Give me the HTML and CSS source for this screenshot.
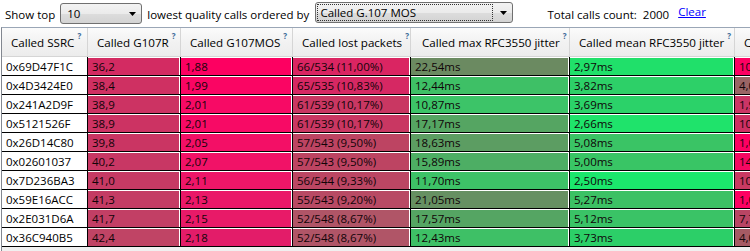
FILE: index.html
```html
<!DOCTYPE html>
<html>
<head>
<meta charset="utf-8">
<link rel="stylesheet" href="styles.css">
</head>
<body>
<div class="topbar">
  <span class="lbl">Show top</span>
  <div class="sel sel-top">
    <span class="sel-text">10</span>
    <svg class="arrow" width="7" height="4" viewBox="0 0 7 4"><path d="M0 0h7L3.5 4z" fill="#000"/></svg>
  </div>
  <span class="lbl lbl-mid">lowest quality calls ordered by</span>
  <div class="sel sel-order">
    <span class="sel-text focus">Called G.107 MOS</span>
    <svg class="arrow" width="7" height="4" viewBox="0 0 7 4"><path d="M0 0h7L3.5 4z" fill="#000"/></svg>
  </div>
  <span class="lbl lbl-total">Total calls count:</span>
  <span class="lbl lbl-count">2000</span>
  <a class="clear" href="#">Clear</a>
</div>
<div class="wrap">
  <div class="grid">
    <div class="h">Called SSRC<sup>?</sup></div>
    <div class="h">Called G107R<sup>?</sup></div>
    <div class="h">Called G107MOS<sup>?</sup></div>
    <div class="h">Called lost packets<sup>?</sup></div>
    <div class="h h-wide">Called max RFC3550 jitter<sup>?</sup></div>
    <div class="h">Called mean RFC3550 jitter<sup>?</sup></div>
    <div class="h">Called min RFC3550 jitter<sup>?</sup></div>

    <div class="c c-id">0x69D47F1C</div>
    <div class="c"><div class="f" style="background:#d32b62">36,2</div></div>
    <div class="c"><div class="f" style="background:#fd0061">1,88</div></div>
    <div class="c"><div class="f" style="background:#da2562">66/534 (11,00%)</div></div>
    <div class="c"><div class="f" style="background:#6b8a61">22,54ms</div></div>
    <div class="c"><div class="f" style="background:#20e06a">2,97ms</div></div>
    <div class="c"><div class="f" style="background:#fd0062">10,00ms</div></div>

    <div class="c c-id">0x4D3424E0</div>
    <div class="c"><div class="f" style="background:#cf3062">38,4</div></div>
    <div class="c"><div class="f" style="background:#fa0563">1,99</div></div>
    <div class="c"><div class="f" style="background:#d62863">65/535 (10,83%)</div></div>
    <div class="c"><div class="f" style="background:#3ec066">12,44ms</div></div>
    <div class="c"><div class="f" style="background:#2dd068">3,82ms</div></div>
    <div class="c"><div class="f" style="background:#9a6565">4,00ms</div></div>

    <div class="c c-id">0x241A2D9F</div>
    <div class="c"><div class="f" style="background:#cc3363">38,9</div></div>
    <div class="c"><div class="f" style="background:#f70a65">2,01</div></div>
    <div class="c"><div class="f" style="background:#c93762">61/539 (10,17%)</div></div>
    <div class="c"><div class="f" style="background:#3cc468">10,87ms</div></div>
    <div class="c"><div class="f" style="background:#2bd269">3,69ms</div></div>
    <div class="c"><div class="f" style="background:#cc3565">1,90ms</div></div>

    <div class="c c-id">0x5121526F</div>
    <div class="c"><div class="f" style="background:#cc3363">38,9</div></div>
    <div class="c"><div class="f" style="background:#f70a65">2,01</div></div>
    <div class="c"><div class="f" style="background:#c93762">61/539 (10,17%)</div></div>
    <div class="c"><div class="f" style="background:#55a562">17,17ms</div></div>
    <div class="c"><div class="f" style="background:#1fe36b">2,66ms</div></div>
    <div class="c"><div class="f" style="background:#cf3063">10,00ms</div></div>

    <div class="c c-id">0x26D14C80</div>
    <div class="c"><div class="f" style="background:#ca3563">39,8</div></div>
    <div class="c"><div class="f" style="background:#f30f66">2,05</div></div>
    <div class="c"><div class="f" style="background:#bd4462">57/543 (9,50%)</div></div>
    <div class="c"><div class="f" style="background:#5c9d62">18,63ms</div></div>
    <div class="c"><div class="f" style="background:#3ac465">5,08ms</div></div>
    <div class="c"><div class="f" style="background:#fd0062">1,00ms</div></div>

    <div class="c c-id">0x02601037</div>
    <div class="c"><div class="f" style="background:#c83764">40,2</div></div>
    <div class="c"><div class="f" style="background:#f11267">2,07</div></div>
    <div class="c"><div class="f" style="background:#bd4462">57/543 (9,50%)</div></div>
    <div class="c"><div class="f" style="background:#4dae64">15,89ms</div></div>
    <div class="c"><div class="f" style="background:#39c565">5,00ms</div></div>
    <div class="c"><div class="f" style="background:#f50862">14,00ms</div></div>

    <div class="c c-id">0x7D236BA3</div>
    <div class="c"><div class="f" style="background:#c63a64">41,0</div></div>
    <div class="c"><div class="f" style="background:#ee1668">2,11</div></div>
    <div class="c"><div class="f" style="background:#bb4663">56/544 (9,33%)</div></div>
    <div class="c"><div class="f" style="background:#3dc267">11,70ms</div></div>
    <div class="c"><div class="f" style="background:#1be76c">2,50ms</div></div>
    <div class="c"><div class="f" style="background:#c83a62">10,00ms</div></div>

    <div class="c c-id">0x59E16ACC</div>
    <div class="c"><div class="f" style="background:#c43c64">41,3</div></div>
    <div class="c"><div class="f" style="background:#ea1868">2,13</div></div>
    <div class="c"><div class="f" style="background:#b84a64">55/543 (9,20%)</div></div>
    <div class="c"><div class="f" style="background:#669062">21,05ms</div></div>
    <div class="c"><div class="f" style="background:#3cc164">5,27ms</div></div>
    <div class="c"><div class="f" style="background:#fd0062">1,00ms</div></div>

    <div class="c c-id">0x2E031D6A</div>
    <div class="c"><div class="f" style="background:#c23f65">41,7</div></div>
    <div class="c"><div class="f" style="background:#e81a68">2,15</div></div>
    <div class="c"><div class="f" style="background:#b05567">52/548 (8,67%)</div></div>
    <div class="c"><div class="f" style="background:#55a563">17,57ms</div></div>
    <div class="c"><div class="f" style="background:#3ac366">5,12ms</div></div>
    <div class="c"><div class="f" style="background:#b94564">7,70ms</div></div>

    <div class="c c-id">0x36C940B5</div>
    <div class="c"><div class="f" style="background:#c04465">42,4</div></div>
    <div class="c"><div class="f" style="background:#e31c69">2,18</div></div>
    <div class="c"><div class="f" style="background:#b05567">52/548 (8,67%)</div></div>
    <div class="c"><div class="f" style="background:#3ec066">12,43ms</div></div>
    <div class="c"><div class="f" style="background:#2ccf68">3,73ms</div></div>
    <div class="c"><div class="f" style="background:#a55a64">4,00ms</div></div>
  </div>
</div>
</body>
</html>
```
FILE: styles.css
```css
html, body {
  margin: 0;
  padding: 0;
  width: 750px;
  height: 251px;
  overflow: hidden;
  background: #ffffff;
  font-family: "Open Sans", "DejaVu Sans", sans-serif;
  font-size: 11.5px;
  color: #000;
}

.topbar {
  display: flex;
  align-items: flex-start;
  height: 27px;
  padding-left: 5px;
  white-space: nowrap;
}

.lbl {
  margin-top: 7px;
  line-height: 16px;
}

.lbl-mid {
  margin-left: 5px;
}

.lbl-total {
  margin-left: 34px;
}

.lbl-count {
  margin-left: 6px;
}

.clear {
  margin-top: 4px;
  margin-left: 9px;
  line-height: 16px;
  color: #0000ff;
  text-decoration: underline;
}

.sel {
  box-sizing: border-box;
  height: 21px;
  border: 1px solid #707070;
  border-radius: 3px;
  background: linear-gradient(#f3f3f3 0%, #ebebeb 50%, #dddddd 51%, #d3d3d3 100%);
  display: flex;
  align-items: center;
}

.sel-top {
  width: 82px;
  margin-top: 3px;
  margin-left: 5px;
}

.sel-order {
  width: 198px;
  margin-top: 2px;
  margin-left: 6px;
}

.sel-text {
  padding-left: 6px;
  line-height: 15px;
}

.sel-order .sel-text {
  box-sizing: border-box;
  margin-left: 2px;
  padding-left: 2px;
  width: 174px;
  height: 15px;
  outline: 1px dotted #333;
}

.arrow {
  margin-left: auto;
  margin-right: 5px;
}

.wrap {
  margin-left: 1px;
  border-left: 1px solid #828790;
  border-top: 1px solid #9aa6b6;
  height: 223px;
  background: #f0f0f0;
  overflow: hidden;
}

.grid {
  display: grid;
  grid-template-columns: 86px 93px 112px 118px 159px 165px 160px;
  grid-template-rows: 29px;
  grid-auto-rows: 19px;
  width: 893px;
  background: #ffffff;
}

.h {
  box-sizing: border-box;
  height: 29px;
  padding-left: 9px;
  display: flex;
  align-items: center;
  white-space: nowrap;
  overflow: hidden;
  border-right: 1px solid #d5d5d5;
  border-bottom: 1px solid #d5d5d5;
  background: linear-gradient(#fbfbfb 0%, #f2f2f2 50%, #ececec 100%);
  font-size: 11.6px;
}

.h-wide {
  padding-left: 11px;
}

.h sup {
  font-size: 8px;
  font-weight: bold;
  color: #3d6a98;
  margin-left: 3px;
  position: relative;
  top: -6px;
  vertical-align: top;
  line-height: 10px;
}

.c {
  box-sizing: border-box;
  height: 19px;
  padding: 1px 1px 0 0;
  border-right: 1px solid #000;
  border-bottom: 1px solid #000;
  overflow: hidden;
  white-space: nowrap;
}

.c-id {
  padding: 1px 0 0 4px;
  line-height: 17px;
  background: #fff;
}

.f {
  height: 17px;
  line-height: 17px;
  padding-left: 4px;
  color: #100408;
}
```
